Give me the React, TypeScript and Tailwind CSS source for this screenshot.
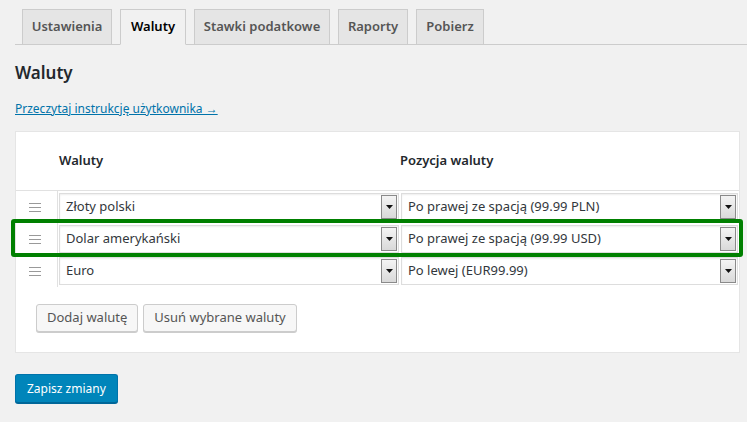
import React from 'react';

const font = { fontFamily: '"Noto Sans", "Open Sans", sans-serif' };

const tabs = [
  { label: 'Ustawienia', w: 'w-[90px]' },
  { label: 'Waluty', w: 'w-[66px]' },
  { label: 'Stawki podatkowe', w: 'w-[136px]' },
  { label: 'Raporty', w: 'w-[70px]' },
  { label: 'Pobierz', w: 'w-[68px]' },
];

const rows = [
  { currency: 'Złoty polski', position: 'Po prawej ze spacją (99.99 PLN)' },
  { currency: 'Dolar amerykański', position: 'Po prawej ze spacją (99.99 USD)' },
  { currency: 'Euro', position: 'Po lewej (EUR99.99)' },
];

const Handle = () => (
  <svg width="12" height="9" viewBox="0 0 12 9" className="block">
    <rect x="0" y="0" width="12" height="1" fill="#999" />
    <rect x="0" y="4" width="12" height="1" fill="#999" />
    <rect x="0" y="8" width="12" height="1" fill="#999" />
  </svg>
);

const FakeSelect = ({ value }: { value: string }) => (
  <div className="flex h-[28px] w-full items-stretch border border-[#ddd] bg-white shadow-[inset_0_1px_2px_rgba(0,0,0,0.07)]">
    <div className="flex flex-1 items-center pl-[6px] text-[13px] text-[#32373c]">{value}</div>
    <div className="my-px mr-px flex w-[16px] items-center justify-center border border-[#8a8a8a] bg-gradient-to-b from-[#f4f4f4] to-[#d9d9d9]">
      <svg width="7" height="4" viewBox="0 0 7 4">
        <path d="M0 0h7L3.5 4z" fill="#111" />
      </svg>
    </div>
  </div>
);

export default function App() {
  return (
    <div className="relative min-h-[422px] w-[747px] bg-[#f1f1f1] pt-[9px] pl-[15px]" style={font}>
      {/* Tabs */}
      <div className="flex gap-2 border-b border-[#ccc] pl-[7px]">
        {tabs.map((t) => {
          const active = t.label === 'Waluty';
          return (
            <div
              key={t.label}
              className={`-mb-px flex h-[36px] items-center justify-center border text-[13px] font-semibold ${t.w} ${
                active
                  ? 'border-[#ccc] border-b-[#f1f1f1] bg-[#f1f1f1] text-black'
                  : 'border-[#ccc] bg-[#e5e5e5] text-[#555]'
              }`}
            >
              {t.label}
            </div>
          );
        })}
      </div>

      <h2 className="mt-[16px] text-[17px] font-semibold leading-[24px] text-[#23282d]">Waluty</h2>

      <a href="#" className="mt-[15px] inline-block text-[12px] leading-[18px] text-[#0073aa] underline">
        Przeczytaj instrukcję użytkownika →
      </a>

      {/* Card */}
      <div className="mt-[12px] w-[725px] border border-[#e5e5e5] bg-white">
        <div className="flex h-[59px] items-center border-b border-[#e1e1e1] text-[13px] font-semibold text-[#23282d]">
          <div className="w-[42px]" />
          <div className="w-[341px] pl-[1px]">Waluty</div>
          <div className="pl-[1px]">Pozycja waluty</div>
        </div>
        {rows.map((r) => (
          <div key={r.currency} className="flex h-[32px] items-center">
            <div className="flex h-full w-[42px] items-center justify-center border-r border-[#e1e1e1] pr-[4px]">
              <Handle />
            </div>
            <div className="w-[341px] pl-[1px]">
              <FakeSelect value={r.currency} />
            </div>
            <div className="flex-1 pl-[2px] pr-[1px]">
              <FakeSelect value={r.position} />
            </div>
          </div>
        ))}
        <div className="flex gap-[5px] pt-[17px] pb-[20px] pl-[20px]">
          <button className="h-[28px] rounded-[3px] border border-[#ccc] bg-[#f7f7f7] px-[10px] text-[13px] text-[#555] shadow-[0_1px_0_#ccc]">
            Dodaj walutę
          </button>
          <button className="h-[28px] rounded-[3px] border border-[#ccc] bg-[#f7f7f7] px-[10px] text-[13px] text-[#555] shadow-[0_1px_0_#ccc]">
            Usuń wybrane waluty
          </button>
        </div>
      </div>

      <button className="mt-[21px] h-[29px] rounded-[3px] border border-[#0073aa] border-b-[#006799] bg-[#0085ba] px-[11px] text-[12px] text-white shadow-[0_1px_0_#006799]">
        Zapisz zmiany
      </button>

      {/* highlight frame */}
      <div className="pointer-events-none absolute top-[219px] left-[11px] h-[38px] w-[732px] rounded-[3px] border-[4px] border-[#008000]" />
    </div>
  );
}
